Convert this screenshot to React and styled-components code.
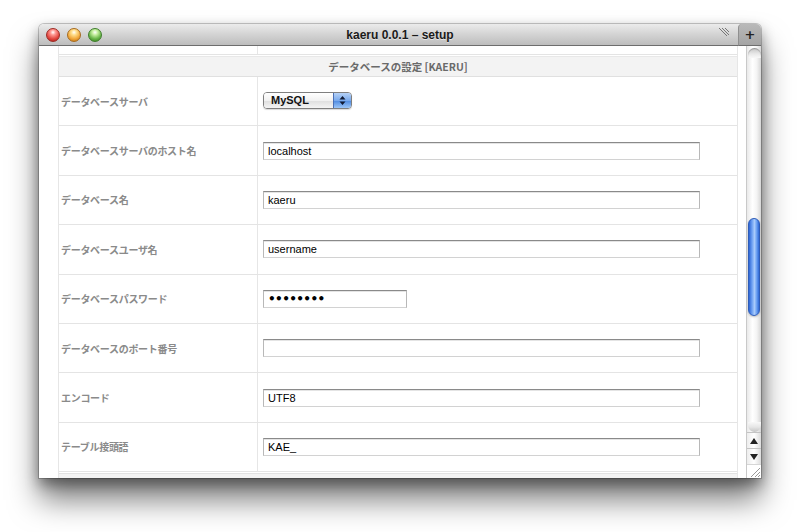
import React from "react";
import styled, { createGlobalStyle } from "styled-components";

const Global = createGlobalStyle`
  html, body { margin: 0; padding: 0; background: #ffffff; }
  body { font-family: "Liberation Sans", "Noto Sans CJK JP", sans-serif; }
  * { box-sizing: border-box; }
`;

const Page = styled.div`
  width: 800px;
  height: 532px;
  padding: 24px 39px;
  overflow: hidden;
`;

const Window = styled.div`
  width: 722px;
  height: 454px;
  display: flex;
  flex-direction: column;
  border-radius: 5px 5px 0 0;
  background: #fff;
  box-shadow: 0 22px 30px rgba(0, 0, 0, 0.5), 0 6px 14px rgba(0, 0, 0, 0.4), 0 0 0 1px rgba(0, 0, 0, 0.2);
`;

const TitleBar = styled.div`
  height: 22px;
  flex: none;
  display: flex;
  align-items: center;
  border-radius: 5px 5px 0 0;
  background: linear-gradient(#ebebeb, #d3d3d3 50%, #bdbdbd);
  border-bottom: 1px solid #6d6d6d;
`;

const Lights = styled.div`
  display: flex;
  gap: 7px;
  padding-left: 7px;
  width: 120px;
`;

const Light = styled.span`
  width: 14px;
  height: 14px;
  border-radius: 50%;
  border: 1px solid ${(p) => p.$edge};
  background: radial-gradient(circle at 50% 28%, #ffffff 0%, ${(p) => p.$hi} 24%, ${(p) => p.$c} 62%, ${(p) => p.$lo} 100%);
`;

const Title = styled.div`
  flex: 1;
  text-align: center;
  font-family: "Lucida Grande", "Liberation Sans", sans-serif;
  font-weight: bold;
  font-size: 12px;
  color: #1a1a1a;
  padding-top: 1px;
  text-shadow: 0 1px 0 rgba(255, 255, 255, 0.5);
`;

const TitleRight = styled.div`
  width: 120px;
  height: 100%;
  display: flex;
  justify-content: flex-end;
  align-items: stretch;
`;

const TabMark = styled.div`
  width: 20px;
  display: flex;
  align-items: flex-start;
  padding-top: 3px;
`;

const PlusTab = styled.div`
  width: 23px;
  height: 22px;
  margin-bottom: -1px;
  border-top-left-radius: 4px;
  border-top-right-radius: 5px;
  background: linear-gradient(#b9b9b9, #a4a4a4);
  border-left: 1px solid #8f8f8f;
  border-bottom: 1px solid #6d6d6d;
  display: flex;
  align-items: center;
  justify-content: center;
  font-family: "DejaVu Sans", sans-serif;
  font-weight: bold;
  font-size: 13px;
  color: #222;
`;

const Body = styled.div`
  flex: 1;
  display: flex;
  min-height: 0;
`;

const Content = styled.div`
  flex: 1;
  padding: 0 8px 0 19px;
  overflow: hidden;
`;

const Table = styled.div`
  border-left: 1px solid #e6e6e6;
  border-right: 1px solid #e6e6e6;
`;

const Row = styled.div`
  display: grid;
  grid-template-columns: 199px 1fr;
  height: ${(p) => p.$h}px;
  border-bottom: 1px solid #e4e4e4;
`;

const Cell = styled.div`
  display: flex;
  align-items: center;
  padding-left: ${(p) => (p.$right ? 5 : 2)}px;
  border-right: ${(p) => (p.$right ? "none" : "1px solid #e6e6e6")};
`;

const Header = styled.div`
  height: 21px;
  margin-top: 1px;
  background: #f3f3f3;
  border-top: 1px solid #e8e8e8;
  border-bottom: 1px solid #e0e0e0;
  display: flex;
  align-items: center;
  justify-content: center;
  font-family: "Noto Sans CJK JP", sans-serif;
  font-weight: bold;
  font-size: 10.5px;
  color: #6a6a6a;
`;

const Footer = styled.div`
  height: 10px;
  margin-top: 1px;
  background: #f3f3f3;
  border-top: 1px solid #e2e2e2;
`;

const Label = styled.span`
  font-family: "Noto Sans CJK JP", sans-serif;
  font-weight: bold;
  font-size: 10px;
  color: #8a8a8a;
  letter-spacing: -0.3px;
  text-shadow: 0 1px 0 rgba(255, 255, 255, 0.9);
`;

const TextInput = styled.input`
  width: ${(p) => p.$w}px;
  height: 18px;
  padding: 0 4px;
  border: 1px solid #b8b8b8;
  border-top-color: #8a8a8a;
  border-bottom-color: #d2d2d2;
  box-shadow: inset 0 1px 0 #e4e4e4;
  background: #fff;
  font-family: "Lucida Grande", "Liberation Sans", sans-serif;
  font-size: 11px;
  color: #000;
  outline: none;
  &[type="password"] {
    font-family: "DejaVu Sans", sans-serif;
    font-size: 12px;
    font-weight: bold;
    letter-spacing: -0.6px;
  }
`;

const Popup = styled.div`
  width: 89px;
  height: 17px;
  display: flex;
  border: 1px solid #7f7f7f;
  border-radius: 4px;
  overflow: hidden;
  box-shadow: 0 1px 1px rgba(0, 0, 0, 0.15);
  margin-top: -2px;
`;

const PopupText = styled.div`
  flex: 1;
  display: flex;
  align-items: center;
  padding-left: 7px;
  background: linear-gradient(#ffffff, #f1f1f1 50%, #dedede 51%, #f4f4f4);
  font-family: "Lucida Grande", "Liberation Sans", sans-serif;
  font-size: 11px;
  font-weight: 600;
  color: #111;
`;

const PopupArrow = styled.div`
  width: 18px;
  border-left: 1px solid #4a6fb5;
  background: linear-gradient(#b6d2f7, #79a9ec 50%, #4d89e0 51%, #9cc6f8);
  display: flex;
  align-items: center;
  justify-content: center;
`;

const Scrollbar = styled.div`
  width: 15px;
  flex: none;
  display: flex;
  flex-direction: column;
  border-left: 1px solid #c9c9c9;
  background: linear-gradient(to right, #e9e9e9, #ffffff 40%, #f4f4f4 70%, #d6d6d6);
`;

const Track = styled.div`
  flex: 1;
  display: flex;
  flex-direction: column;
  align-items: center;
  padding-top: 2px;
`;

const Cap = styled.div`
  width: 13px;
  height: 10px;
  border-radius: 7px 7px 0 0;
  background: linear-gradient(#c4c4c4, #e9e9e9 60%, #f8f8f8);
  box-shadow: inset 0 1px 1px rgba(0, 0, 0, 0.25);
`;

const Thumb = styled.div`
  width: 12px;
  height: 98px;
  border-radius: 6px;
  border: 1px solid #2e5cb8;
  background: linear-gradient(to right, #2b64d4, #6da0f2 30%, #a9cbfb 55%, #6fa3f3 75%, #2f69d6);
  box-shadow: 0 1px 2px rgba(0, 0, 0, 0.25);
`;

const BottomCap = styled.div`
  width: 13px;
  height: 10px;
  margin-top: auto;
  border-radius: 0 0 7px 7px;
  background: linear-gradient(#f8f8f8, #e6e6e6 50%, #c4c4c4);
`;

const ArrowBtn = styled.div`
  height: 16px;
  display: flex;
  align-items: center;
  justify-content: center;
  border-top: 1px solid #c4c4c4;
  background: linear-gradient(to right, #ededed, #ffffff 50%, #dcdcdc);
`;

const Grip = styled.div`
  height: 14px;
  display: flex;
  align-items: flex-end;
  justify-content: flex-end;
  background: #fff;
  border-top: 1px solid #d6d6d6;
`;

const rows = [
  { label: "データベースサーバ", kind: "select" },
  { label: "データベースサーバのホスト名", value: "localhost", w: 437 },
  { label: "データベース名", value: "kaeru", w: 437 },
  { label: "データベースユーザ名", value: "username", w: 437 },
  { label: "データベースパスワード", value: "password", w: 144, type: "password" },
  { label: "データベースのポート番号", value: "", w: 437 },
  { label: "エンコード", value: "UTF8", w: 437 },
  { label: "テーブル接頭語", value: "KAE_", w: 437 },
];

export default function App() {
  return (
    <>
      <Global />
      <Page>
        <Window>
          <TitleBar>
            <Lights>
              <Light $c="#e2463f" $hi="#ff9a94" $lo="#a5150f" $edge="#9c2a24" />
              <Light $c="#f1a73a" $hi="#ffe08f" $lo="#b86a08" $edge="#a66a1e" />
              <Light $c="#68b548" $hi="#c8f0a2" $lo="#2f7a17" $edge="#3e7d2b" />
            </Lights>
            <Title>kaeru 0.0.1 – setup</Title>
            <TitleRight>
              <TabMark>
                <svg width="12" height="10" viewBox="0 0 12 10">
                  <path d="M1 1 L9 9 M4 1 L11 8 M7 1 L11 5" stroke="#777" strokeWidth="1" fill="none" />
                </svg>
              </TabMark>
              <PlusTab>+</PlusTab>
            </TitleRight>
          </TitleBar>
          <Body>
            <Content>
              <Table>
                <Row $h={9}>
                  <Cell />
                  <Cell $right />
                </Row>
                <Header>データベースの設定 [KAERU]</Header>
                {rows.map((r, i) => (
                  <Row key={i} $h={49.4}>
                    <Cell>
                      <Label>{r.label}</Label>
                    </Cell>
                    <Cell $right>
                      {r.kind === "select" ? (
                        <Popup>
                          <PopupText>MySQL</PopupText>
                          <PopupArrow>
                            <svg width="7" height="11" viewBox="0 0 7 11">
                              <path d="M3.5 1 L6.5 4.5 L0.5 4.5 Z M3.5 10 L6.5 6.5 L0.5 6.5 Z" fill="#101a33" />
                            </svg>
                          </PopupArrow>
                        </Popup>
                      ) : (
                        <TextInput $w={r.w} type={r.type || "text"} defaultValue={r.value} />
                      )}
                    </Cell>
                  </Row>
                ))}
                <Footer />
              </Table>
            </Content>
            <Scrollbar>
              <Track>
                <Cap />
                <Thumb style={{ marginTop: 160 }} />
                <BottomCap />
              </Track>
              <ArrowBtn>
                <svg width="8" height="6" viewBox="0 0 8 6">
                  <path d="M4 0 L8 6 L0 6 Z" fill="#222" />
                </svg>
              </ArrowBtn>
              <ArrowBtn>
                <svg width="8" height="6" viewBox="0 0 8 6">
                  <path d="M0 0 L8 0 L4 6 Z" fill="#222" />
                </svg>
              </ArrowBtn>
              <Grip>
                <svg width="12" height="12" viewBox="0 0 12 12">
                  <path d="M11 2 L2 11 M11 6 L6 11 M11 9 L9 11" stroke="#999" strokeWidth="1" fill="none" />
                </svg>
              </Grip>
            </Scrollbar>
          </Body>
        </Window>
      </Page>
    </>
  );
}
